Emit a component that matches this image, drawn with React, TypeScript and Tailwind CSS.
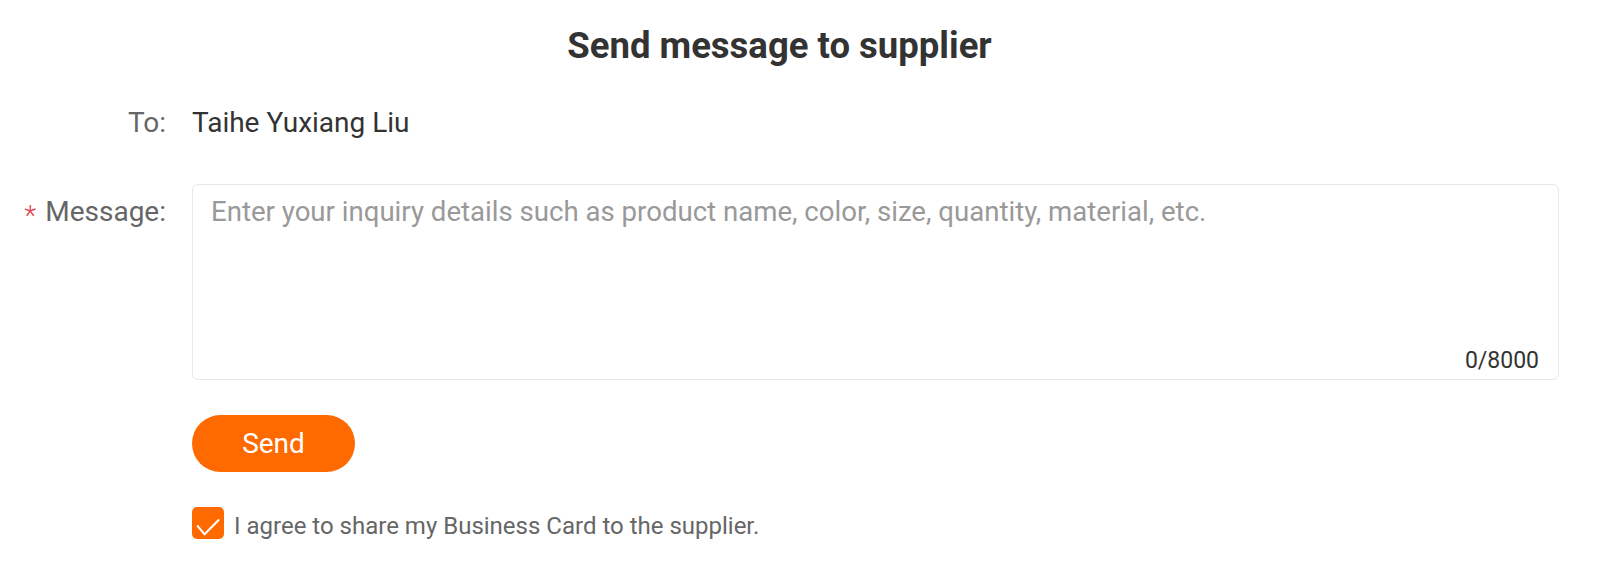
const App = () => {
  return (
    <div className="w-full min-h-[586px] bg-white pr-[62px] font-['Roboto',sans-serif]">
      <h2 className="pt-[24px] text-center text-[36.5px] leading-[44px] font-bold text-[#333]">Send message to supplier</h2>

      <div className="mt-[35px] grid grid-cols-[166px_1fr] gap-x-[26px]">
        <div className="text-right text-[28px] leading-[40px] text-[#666]">To:</div>
        <div className="text-[28px] leading-[40px] text-[#333]">Taihe Yuxiang Liu</div>
      </div>

      <div className="mt-[41px] grid grid-cols-[166px_1fr] items-start gap-x-[26px]">
        <div className="pt-[8px] flex items-start justify-end text-[28px] leading-[40px] text-[#666]">
          <span className="relative top-[4px] mr-[9px] text-[28px] font-light leading-[40px] text-[#e5404f]">*</span>
          Message:
        </div>
        <div className="relative h-[196px] rounded-[6px] border border-[#e8e8e8] bg-white">
          <textarea
            className="h-full w-full resize-none bg-transparent pl-[18px] pr-[15px] pt-[7px] text-[27.6px] leading-[40px] text-[#333] outline-none placeholder:text-[#999]"
            placeholder="Enter your inquiry details such as product name, color, size, quantity, material, etc."
          />
          <span className="absolute bottom-[4px] right-[19px] text-[23px] leading-[28px] text-[#333]">0/8000</span>
        </div>
      </div>

      <div className="grid grid-cols-[166px_1fr] gap-x-[26px]">
        <div />
        <div>
          <button className="mt-[35px] h-[57px] w-[163px] rounded-full bg-[#ff6a00] text-[28px] text-white">Send</button>
          <label className="mt-[35px] flex items-start gap-[10px]">
            <span className="flex h-[32px] w-[32px] items-center justify-center rounded-[5px] bg-[#ff6a00]">
              <svg width="32" height="32" viewBox="0 0 32 32" fill="none">
                <path d="M5.6 19 L12.6 27.3 L26.6 13" stroke="white" strokeWidth="2" strokeLinecap="round" strokeLinejoin="round" />
              </svg>
            </span>
            <span className="mt-[3px] text-[24px] leading-[32px] text-[#666]">I agree to share my Business Card to the supplier.</span>
          </label>
        </div>
      </div>
    </div>
  );
};

export default App;
